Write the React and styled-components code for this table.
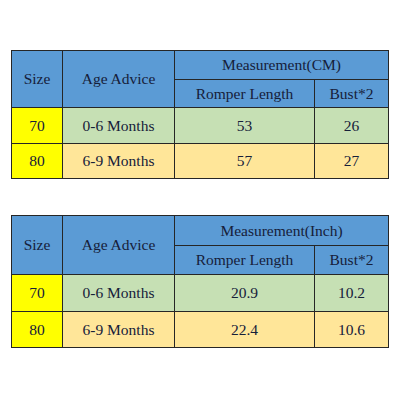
import React from "react";
import styled, { createGlobalStyle } from "styled-components";

const Global = createGlobalStyle`
  html, body { margin: 0; padding: 0; background: #ffffff; }
  body { font-family: "Liberation Serif", "Times New Roman", serif; }
`;

const Page = styled.div`
  width: 400px;
  height: 400px;
  padding: 50px 0 0 11px;
  box-sizing: border-box;
  display: flex;
  flex-direction: column;
  gap: 36px;
`;

const Table = styled.table`
  border-collapse: collapse;
  table-layout: fixed;
  width: 377px;
  font-family: "Liberation Serif", "Times New Roman", serif;
  font-size: 15.5px;
  color: #16203a;
`;

const bg = {
  head: "#5b9bd5",
  size: "#ffff00",
  green: "#c6e0b4",
  tan: "#ffe699",
};

const Cell = styled.td`
  border: 1px solid #262626;
  background: ${(p) => bg[p.$tone]};
  text-align: center;
  vertical-align: middle;
  padding: 0;
  box-sizing: border-box;
  height: ${(p) => p.$h}px;
  line-height: 1;
  font-family: inherit;
  font-size: inherit;
`;

const Row = styled.tr``;

const widths = [51, 112, 140, 74];

function SizeTable({ unit, rows, heights }) {
  return (
    <Table>
      <colgroup>
        {widths.map((w, i) => (
          <col key={i} style={{ width: w }} />
        ))}
      </colgroup>
      <tbody>
        <Row>
          <Cell $tone="head" rowSpan={2}>Size</Cell>
          <Cell $tone="head" rowSpan={2}>Age Advice</Cell>
          <Cell $tone="head" colSpan={2} $h={heights[0]}>
            Measurement({unit})
          </Cell>
        </Row>
        <Row>
          <Cell $tone="head" $h={heights[1]}>Romper Length</Cell>
          <Cell $tone="head">Bust*2</Cell>
        </Row>
        {rows.map((r, i) => (
          <Row key={r.size}>
            <Cell $tone="size" $h={heights[2 + i]}>{r.size}</Cell>
            <Cell $tone={i === 0 ? "green" : "tan"}>{r.age}</Cell>
            <Cell $tone={i === 0 ? "green" : "tan"}>{r.length}</Cell>
            <Cell $tone={i === 0 ? "green" : "tan"}>{r.bust}</Cell>
          </Row>
        ))}
      </tbody>
    </Table>
  );
}

export default function App() {
  return (
    <>
      <Global />
      <Page>
        <SizeTable
          unit="CM"
          heights={[29, 28, 36, 35]}
          rows={[
            { size: "70", age: "0-6 Months", length: "53", bust: "26" },
            { size: "80", age: "6-9 Months", length: "57", bust: "27" },
          ]}
        />
        <SizeTable
          unit="Inch"
          heights={[30, 29, 37, 36]}
          rows={[
            { size: "70", age: "0-6 Months", length: "20.9", bust: "10.2" },
            { size: "80", age: "6-9 Months", length: "22.4", bust: "10.6" },
          ]}
        />
      </Page>
    </>
  );
}
